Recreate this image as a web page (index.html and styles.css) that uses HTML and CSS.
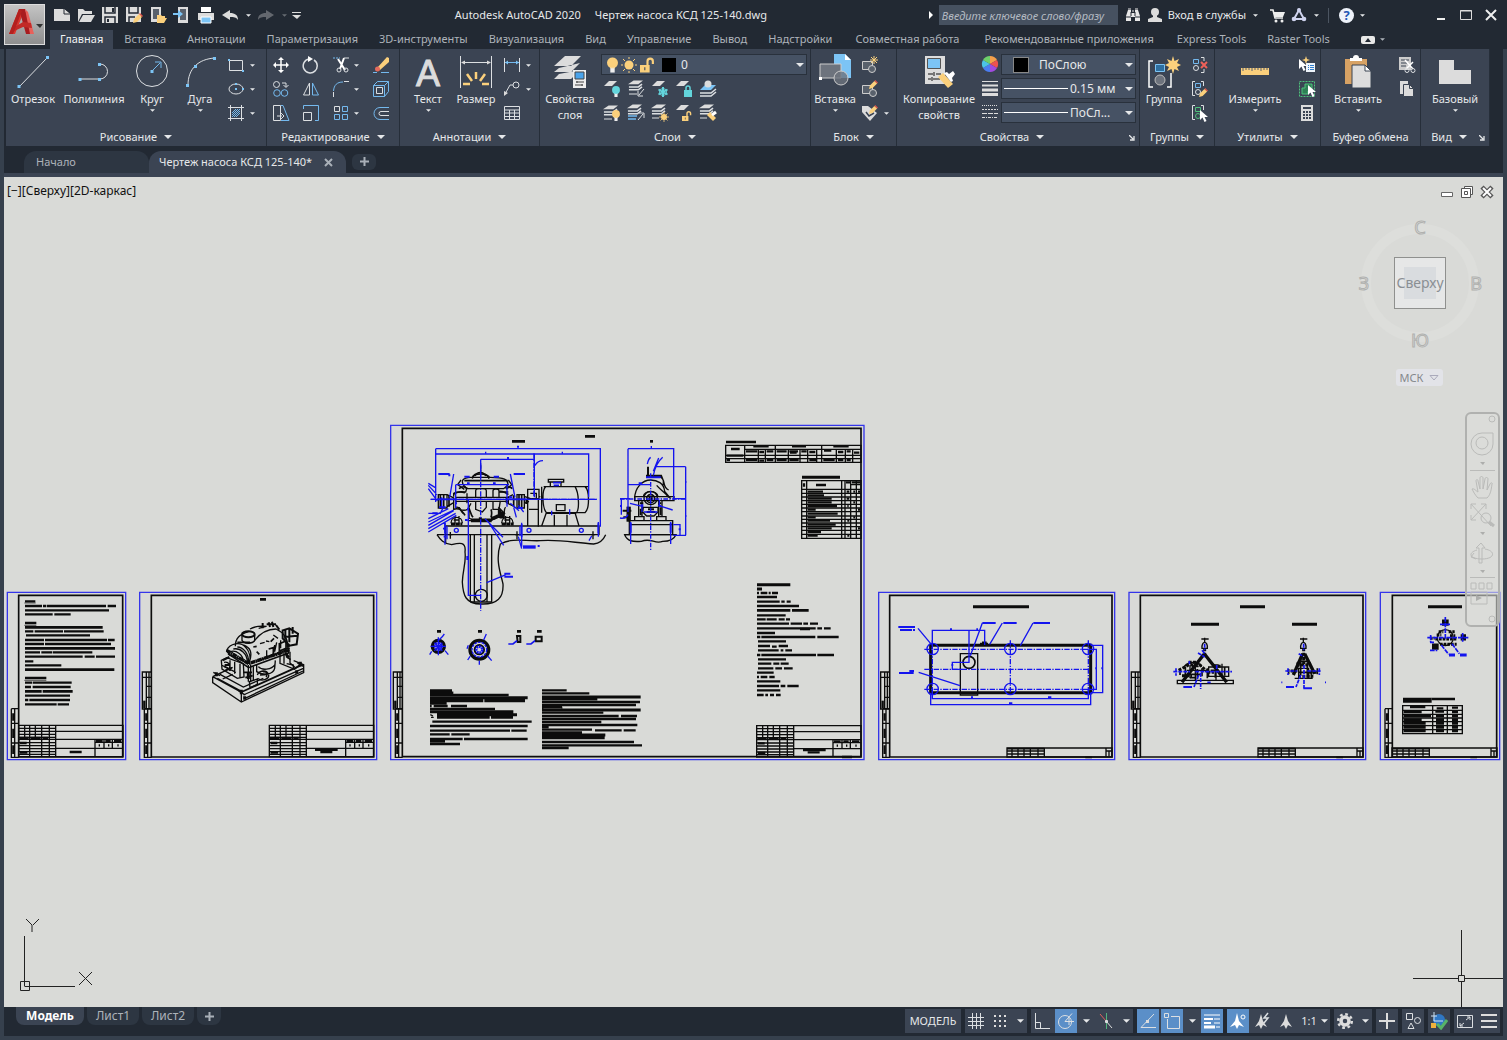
FILE: index.html
```
<!DOCTYPE html>
<html lang="ru">
<head>
    <meta charset="UTF-8">
    <meta name="viewport" content="width=device-width, initial-scale=1.0">
    <title>Autodesk AutoCAD 2020 - Чертеж насоса КСД 125-140.dwg</title>
    <link rel="stylesheet" href="styles.css">
</head>
<body>
    <!-- Shared symbols -->
    <svg class="sprite" aria-hidden="true">
        <symbol id="caret" viewBox="0 0 8 4"><path d="M0 0h8L4 4z" fill="currentColor"/></symbol>
        <symbol id="corner" viewBox="0 0 6 6"><path d="M0 0l4 4M5 1v4H1" fill="none" stroke="currentColor" stroke-width="1.3"/></symbol>
        <symbol id="layers" viewBox="0 0 16 12">
            <path d="M6 0h10l-5 4H0z" class="wf"/>
            <path d="M1 7h10l4-3M1 10h10l4-3" class="w" stroke-width="1.6"/>
        </symbol>
        <symbol id="cursor" viewBox="0 0 8 12"><path d="M0 0v10l2.500-2.500L4.500 12l2-1-2-4H8z" fill="#fff"/></symbol>
        <symbol id="pencil" viewBox="0 0 10 10"><path d="M0 10l1-4 5-5 3 3-5 5z" fill="#fbd07c"/><path d="M6 1l1-1 3 3-1 1z" fill="#e2574c"/></symbol>
        <symbol id="bulb" viewBox="0 0 10 14"><circle cx="5" cy="5" r="5" fill="currentColor"/><path d="M3 9h4v5H3z" fill="#eee"/><path d="M3 9h4v1H3z" fill="currentColor"/></symbol>
        <symbol id="open-lock" viewBox="0 0 14 14"><path d="M0 7h9v7H0z" fill="#fbd07c"/><path d="M7 7V3.500a2.500 2.500 0 0 1 5 0V6" fill="none" stroke="#fbd07c" stroke-width="2"/><path d="M4 9h1v3H4z" fill="#3b4453"/></symbol>

        <!-- stamp of a sheet, 104 x 31 units of the drawing, drawn at triple scale -->
        <symbol id="stamp" viewBox="0 0 313 95" overflow="visible">
            <path class="k" d="M0 0h313v94H0zM0 9h111M0 18h313M0 27h111M0 36h111M0 42h313M0 52h111M0 61h111M0 70h111M111 69h202M0 79h111M0 87h111M18 0v42M33 0v94M50 0v42M69 0v94M92 0v94M111 0v94M229 42v52M256 42v27M281 42v27M229 51h84"/>
            <path class="k bar" d="M2 38h28M36 38h30M72 38h16M4 53h20M4 82h22M153 80h36M232 47h20M260 47h16M286 47h22M240 60h4M268 60h4M296 60h4"/>
        </symbol>
        <symbol id="stamp-low" viewBox="0 0 315 28" overflow="visible">
            <path class="k" d="M0 0h315v27H0zM0 9h112M0 18h112M15 0v27M33 0v27M51 0v27M70 0v27M93 0v27M112 0v27M297 0v27M297 9h18M306 9v18"/>
            <path class="k" stroke-width="5" d="M0 2h112M235 28h20"/>
        </symbol>
        <symbol id="side-low" viewBox="0 0 22 146" overflow="visible">
            <path class="k" d="M0 0h22M0 0v146h22M0 44h22M0 103h22M10 0v146"/>
            <path class="k" stroke-width="7" d="M6 14v22M6 60v28M6 110v26"/>
        </symbol>
        <symbol id="side" viewBox="0 0 28 256" overflow="visible">
            <path class="k" d="M28 0H0v111h28M12 0v111M20 0v111M0 16h28M12 43h16M12 76h16"/>
            <path class="k" stroke-width="7" d="M6 86v22"/>
            <use href="#side-low" x="6" y="110" width="22" height="146"/>
        </symbol>
    </svg>

    <header class="header">
        <button class="app-button" aria-label="Меню приложения">
            <svg width="38" height="38" viewBox="0 0 38 38">
                <path d="M3 28L13 3h6L9 28z" fill="#d9362f"/>
                <path d="M13 3h6l8 25h-7z" fill="#a81c1f"/>
                <path d="M19 3l3 3 6 22h-4z" fill="#e8605a"/>
                <path d="M7 22l10-6 8 1 1 5-9-1-11 5z" fill="#c22a27"/>
                <path d="M13 3l3 2L7 28H3z" fill="#b3211f"/>
                <path d="M30 18h7l-3 4z" fill="#333"/>
            </svg>
        </button>

        <div class="titlebar">
            <div class="quick">
                <button aria-label="Создать"><svg viewBox="0 0 18 18"><path d="M1 3h10l6 5v7H1z" class="wf"/><path d="M11 3v5h6" class="wf" stroke="#222933"/></svg></button>
                <button aria-label="Открыть"><svg viewBox="0 0 18 18"><path d="M1 16V3h5l2 2h7v3H5z" class="wf"/><path d="M6 9h12l-4 7H2z" class="wf"/></svg></button>
                <button aria-label="Сохранить"><svg viewBox="0 0 18 18"><path d="M1 1h16v16H1z" class="wf"/><path d="M4 1v6h10V1M4 17v-6h10v6" fill="none" stroke="#222933" stroke-width="1.500"/><path d="M11 2h2v4h-2zM6 13h2v3H6z" fill="#222933"/></svg></button>
                <button aria-label="Сохранить как"><svg viewBox="0 0 18 18"><path d="M1 1h15v15H1z" class="wf"/><path d="M4 1v6h9V1M4 16v-5h6" fill="none" stroke="#222933" stroke-width="1.500"/><use href="#pencil" x="8" y="7" width="10" height="10"/></svg></button>
                <button aria-label="Открыть из мобильной версии"><svg viewBox="0 0 18 18"><path d="M2 1h10v15H2z" class="wf"/><path d="M4 3h6v10H4z" fill="#59616c"/><path d="M8 17V9h4l1 1h3v2h2l-3 5z" fill="#fbd07c"/></svg></button>
                <button aria-label="Сохранить в мобильную версию"><svg viewBox="0 0 18 18"><path d="M5 1h10v16H5z" class="wf"/><path d="M7 3h6v11H7z" fill="#59616c"/><path d="M0 7h5V4l5 4-5 4V9H0z" class="bf"/></svg></button>
                <button aria-label="Печать"><svg viewBox="0 0 18 18"><path d="M4 1h10v5H4z" fill="#fff"/><path d="M1 7h16v7H1z" class="wf"/><path d="M4 11h10v6H4z" class="bf" stroke="#fff"/></svg></button>
                <button aria-label="Отменить"><svg viewBox="0 0 18 18"><path d="M1 9l8-5v3c5 0 8 2 8 7-2-3-4-3-8-3v3z" class="wf"/></svg></button>
                <button class="narrow" aria-label="Список отмены"><svg class="caret-s"><use href="#caret"/></svg></button>
                <button class="off" aria-label="Повторить"><svg viewBox="0 0 18 18"><path d="M17 9L9 4v3c-5 0-8 2-8 7 2-3 4-3 8-3v3z" class="wf"/></svg></button>
                <button class="narrow off" aria-label="Список повтора"><svg class="caret-s"><use href="#caret"/></svg></button>
                <button class="narrow" aria-label="Настройка панели"><svg viewBox="0 0 18 18"><path d="M5 6h9v1H5zM5 9h9l-4 4z" class="wf"/></svg></button>
            </div>
            <h1 class="title"><span>Autodesk AutoCAD 2020</span><span>Чертеж насоса КСД 125-140.dwg</span></h1>
            <div class="services">
                <svg class="play" viewBox="0 0 4 8"><path d="M0 0l4 4-4 4z" fill="#fff"/></svg>
                <input type="text" class="search" aria-label="Поиск" placeholder="Введите ключевое слово/фразу">
                <button class="find" aria-label="Найти"><svg viewBox="0 0 18 18"><path d="M4 4h3v3h4V4h3l2 6v5h-5v-4H7v4H2v-5z" fill="#e8e8e8"/><path d="M4 3h3M11 3h3M8 5h2" stroke="#e8e8e8"/><path d="M2 11h5M11 11h5M7 6v4M11 6v4" stroke="#222933" fill="none"/></svg></button>
                <button class="login"><svg viewBox="0 0 18 18"><circle cx="9" cy="6" r="4" class="wf"/><path d="M7 8h4v3l5 2v3H2v-3l5-2z" class="wf"/></svg>Вход в службы<svg class="caret-s"><use href="#caret"/></svg></button>
                <button aria-label="Магазин"><svg viewBox="0 0 18 18"><path d="M2 4h3l2 8h8" fill="none" stroke="#eee" stroke-width="1.600"/><path d="M5 6h12l-2 5H7z" fill="#eee"/><circle cx="8" cy="15" r="1.500" fill="#eee"/><circle cx="14" cy="15" r="1.500" fill="#eee"/></svg></button>
                <button class="a360" aria-label="Autodesk 360"><svg viewBox="0 0 18 18"><path d="M9 4L4 13h10z" fill="none" stroke="#cfd3ee" stroke-width="2"/><circle cx="9" cy="4" r="2" fill="#cfd3ee"/><circle cx="4" cy="13" r="2.300" fill="#cfd3ee"/><circle cx="14" cy="13" r="2.300" fill="#cfd3ee"/></svg><svg class="caret-s"><use href="#caret"/></svg></button>
                <button class="help" aria-label="Справка"><span>?</span><svg class="caret-s"><use href="#caret"/></svg></button>
            </div>
            <div class="window-buttons">
                <button aria-label="Свернуть"><svg viewBox="0 0 14 14"><path d="M3 11h8" stroke="#eee" stroke-width="2"/></svg></button>
                <button aria-label="Развернуть"><svg viewBox="0 0 14 14"><path d="M1.500 2.500h11v9h-11z" fill="none" stroke="#ddd"/><path d="M1 3h12" stroke="#ddd"/></svg></button>
                <button aria-label="Закрыть"><svg viewBox="0 0 14 14"><path d="M2 2l10 10M12 2L2 12" stroke="#eee" stroke-width="2"/></svg></button>
            </div>
        </div>

        <nav class="tabs">
            <button class="tab active">Главная</button>
            <button class="tab">Вставка</button>
            <button class="tab">Аннотации</button>
            <button class="tab">Параметризация</button>
            <button class="tab">3D-инструменты</button>
            <button class="tab">Визуализация</button>
            <button class="tab">Вид</button>
            <button class="tab">Управление</button>
            <button class="tab">Вывод</button>
            <button class="tab">Надстройки</button>
            <button class="tab wide">Совместная работа</button>
            <button class="tab wide">Рекомендованные приложения</button>
            <button class="tab">Express Tools</button>
            <button class="tab">Raster Tools</button>
            <button class="tab-toggle" aria-label="Свернуть ленту"><svg width="14" height="8" viewBox="0 0 14 8"><rect width="14" height="8" rx="2" fill="#e8e8e8"/><path d="M4 6h6L7 2z" fill="#222933"/></svg><svg class="caret-s"><use href="#caret"/></svg></button>
        </nav>
    </header>

    <main class="frame">
        <div class="ribbon">
            <section class="panel">
                <div class="panel-body">
                    <button class="big w54"><svg viewBox="0 0 34 38"><path d="M3 34L31 5" class="w"/><path d="M1.500 32h3v3h-3zM30 3h3v3h-3z" class="bf"/></svg>Отрезок</button>
                    <button class="big w68"><svg viewBox="0 0 34 38"><path d="M3 26h20a7.500 7.500 0 0 0 0-15" class="w"/><path d="M1.500 25h3v3h-3zM21 25h3v3h-3zM21 10h3v3h-3z" class="bf"/></svg>Полилиния</button>
                    <button class="big w48"><svg viewBox="0 0 34 38"><circle cx="17" cy="18" r="15.500" class="w"/><path d="M17 18l8-8M20 9h6v6" class="b"/><path d="M15.500 17h3v3h-3z" class="bf"/></svg>Круг<svg class="caret-s"><use href="#caret"/></svg></button>
                    <button class="big w48"><svg viewBox="0 0 34 38"><path d="M5 32C5 16 15 6 32 5" class="w"/><path d="M3 31h3v3H3zM11 12h3v3h-3zM30 4h3v3h-3z" class="bf"/></svg>Дуга<svg class="caret-s"><use href="#caret"/></svg></button>
                    <div class="tools stack">
                        <div class="split"><button aria-label="Прямоугольник"><svg viewBox="0 0 18 18"><path d="M2.500 4.500h13v10h-13z" class="w"/><path d="M1 3h2v2H1zM15 14h2v2h-2z" class="bf"/></svg></button><button class="arrow" aria-label="Еще"><svg class="caret-s"><use href="#caret"/></svg></button></div>
                        <div class="split"><button aria-label="Эллипс"><svg viewBox="0 0 18 18"><ellipse cx="9" cy="9" rx="7" ry="5" class="w"/><path d="M8 8h2v2H8zM15 8h2v2h-2zM8 3h2v2H8z" class="bf"/></svg></button><button class="arrow" aria-label="Еще"><svg class="caret-s"><use href="#caret"/></svg></button></div>
                        <div class="split"><button aria-label="Штриховка"><svg viewBox="0 0 18 18"><path d="M3.500 1v16M14.500 1v16M1 3.500h16M1 14.500h16" class="w"/><path d="M5 9l4-4M5 13l8-8M9 13l4-4M5 11l6-6M7 13l6-6" class="b"/></svg></button><button class="arrow" aria-label="Еще"><svg class="caret-s"><use href="#caret"/></svg></button></div>
                    </div>
                </div>
                <div class="panel-title"><button>Рисование<svg class="caret"><use href="#caret"/></svg></button></div>
            </section>

            <section class="panel">
                <div class="panel-body">
                    <div class="tools modify">
                        <button aria-label="Перенести"><svg viewBox="0 0 18 18"><path d="M9 3v12M3 9h12" stroke="#fff" stroke-width="1.500"/><path d="M9 1l3 3H6zM9 17l3-3H6zM1 9l3-3v6zM17 9l-3-3v6z" fill="#fff"/></svg></button>
                        <button aria-label="Повернуть"><svg viewBox="0 0 18 18"><path d="M12 4a7 7 0 1 1-5-1" class="w" stroke-width="1.500"/><path d="M6 0l5 3-5 3z" fill="#fff"/></svg></button>
                        <div class="split"><button aria-label="Обрезать"><svg viewBox="0 0 18 18"><path d="M1 2h7" class="b" stroke-dasharray="2 1"/><path d="M6 3l7 11M12 2L8 13" stroke="#fff" stroke-width="2" fill="none"/><circle cx="7" cy="14" r="2" class="w"/><circle cx="14" cy="14" r="2" class="w"/><path d="M12 2h5" class="w"/></svg></button><button class="arrow" aria-label="Еще"><svg class="caret-s"><use href="#caret"/></svg></button></div>
                        <button aria-label="Стереть"><svg viewBox="0 0 18 18"><path d="M5 12L15 1l2 1v4l-9 8z" fill="#fbd07c"/><circle cx="5.500" cy="13" r="2.500" fill="#e56b5d"/><path d="M1 16.500h4M9 16.500h8" class="b"/></svg></button>
                        <button aria-label="Копировать"><svg viewBox="0 0 18 18"><circle cx="4.500" cy="4.500" r="3" class="w"/><circle cx="5" cy="13" r="3.300" class="b"/><circle cx="12.500" cy="13" r="3.300" class="b"/><path d="M10 3h4v4M11.500 5l2.500 2.500L16.500 5" class="w"/></svg></button>
                        <button aria-label="Зеркало"><svg viewBox="0 0 18 18"><path d="M7.500 3v12H1.500z" class="w"/><path d="M10.500 3v12h6z" class="b"/></svg></button>
                        <div class="split"><button aria-label="Сопряжение"><svg viewBox="0 0 18 18"><path d="M1.500 11C2 5 5 2 11 2" class="b"/><path d="M1.500 12v5M12 1.500h5" class="w"/></svg></button><button class="arrow" aria-label="Еще"><svg class="caret-s"><use href="#caret"/></svg></button></div>
                        <button aria-label="Расчленить"><svg viewBox="0 0 18 18"><path d="M4.500 7.500h6v6h-6z" class="w"/><path d="M1.500 5.500h11v11h-11zM1.500 5.500l4-4h11l-4 4M16.500 1.500v10l-4 5" class="b"/></svg></button>
                        <button aria-label="Растянуть"><svg viewBox="0 0 18 18"><path d="M1.500 1.500h7v15h-7z" class="w"/><path d="M9 1.500h2l6 15H9" class="b"/><path d="M5 12h5M9 9l3 3-3 3" class="w"/></svg></button>
                        <button aria-label="Масштаб"><svg viewBox="0 0 18 18"><path d="M1.500 8.500h8v8h-8z" class="w"/><path d="M1.500 5V1.500h15v15H13" class="b"/></svg></button>
                        <div class="split"><button aria-label="Массив"><svg viewBox="0 0 18 18"><path d="M2.500 2.500h5v5h-5z" class="w"/><path d="M10.500 2.500h5v5h-5zM2.500 10.500h5v5h-5zM10.500 10.500h5v5h-5z" class="b"/></svg></button><button class="arrow" aria-label="Еще"><svg class="caret-s"><use href="#caret"/></svg></button></div>
                        <button aria-label="Подобие"><svg viewBox="0 0 18 18"><path d="M17 3.500H8a5.500 5.500 0 0 0 0 12h9" class="b"/><path d="M17 7.500H9a2 2 0 0 0 0 4h8" class="w"/></svg></button>
                    </div>
                </div>
                <div class="panel-title"><button>Редактирование<svg class="caret"><use href="#caret"/></svg></button></div>
            </section>

            <section class="panel">
                <div class="panel-body pad">
                    <button class="big w48"><svg viewBox="0 0 34 38"><text x="17" y="33" class="big-a">A</text></svg>Текст<svg class="caret-s"><use href="#caret"/></svg></button>
                    <button class="big w48"><svg viewBox="0 0 34 38"><path d="M1.500 3v32M32.500 3v32M3 9.500h28" class="w"/><path d="M2 9.500l4-2v4zM32 9.500l-4-2v4z" class="wf"/><path d="M17 19v7M8 21l5 7M26 21l-5 7M4 31h7M30 31h-7" stroke="#fbd07c" stroke-width="2.500"/></svg>Размер</button>
                    <div class="tools stack">
                        <div class="split"><button aria-label="Линейный"><svg viewBox="0 0 18 18"><path d="M1.500 2v14M16.500 2v14" class="w"/><path d="M2 6.500h14" class="b"/><path d="M2 6.500l3-2v4zM16 6.500l-3-2v4z" class="bf"/></svg></button><button class="arrow" aria-label="Еще"><svg class="caret-s"><use href="#caret"/></svg></button></div>
                        <div class="split"><button aria-label="Выноска"><svg viewBox="0 0 18 18"><circle cx="13" cy="5" r="3" class="w"/><path d="M10 5H7l-5 9" class="w"/><path d="M1 16v-5l4 2z" class="wf"/></svg></button><button class="arrow" aria-label="Еще"><svg class="caret-s"><use href="#caret"/></svg></button></div>
                        <div class="split"><button aria-label="Таблица"><svg viewBox="0 0 18 18"><path d="M1.500 2.500h15v13h-15zM1 6h16M1 9h16M1 12.500h16M6.500 6v10M11.500 6v10" class="w"/></svg></button></div>
                    </div>
                </div>
                <div class="panel-title"><button>Аннотации<svg class="caret"><use href="#caret"/></svg></button></div>
            </section>

            <section class="panel">
                <div class="panel-body">
                    <button class="big w60"><svg viewBox="0 0 34 38"><path d="M12 3h16L18 13H1zM6 15l-5 4h17l9-9M6 21l-5 5h17l9-9" class="wf"/><path d="M20 17h13v18H20z" fill="#eee"/><path d="M22 19h9v7h-9z" fill="#4aa3ea" stroke="#444"/><path d="M23 29h8M22 32h8M24 28v2M29 31v2" stroke="#444"/></svg><span>Свойства<br>слоя</span></button>
                    <div class="layer-box">
                        <div class="combo layer-combo">
                            <svg width="11" height="16" viewBox="0 0 10 14" class="y"><use href="#bulb"/></svg>
                            <svg width="16" height="16" viewBox="0 0 16 16"><circle cx="8" cy="8" r="4.500" class="yf"/><path d="M8 0v2M8 14v2M0 8h2M14 8h2M2 2l2 2M12 12l2 2M2 14l2-2M12 4l2-2" stroke="#fbd07c"/></svg>
                            <svg width="15" height="16"><use href="#open-lock"/></svg>
                            <i class="swatch"></i>
                            <select aria-label="Слой"><option>0</option></select>
                            <svg class="caret"><use href="#caret"/></svg>
                        </div>
                        <div class="tools layer-tools">
                            <button aria-label="Отключить слой"><svg viewBox="0 0 18 18"><path d="M6 1h8L9 6H1z" class="wf"/><svg x="9" y="6" width="8" height="11" viewBox="0 0 10 14" color="#63d5dc"><use href="#bulb"/></svg></svg></button>
                            <button aria-label="Изолировать слой"><svg viewBox="0 0 18 18"><use href="#layers" x="1" y="0" width="15" height="12"/><path d="M2 14h8" class="w"/><path d="M17 9l-5 6M11 11v5h5" class="w"/></svg></button>
                            <button aria-label="Заморозить слой"><svg viewBox="0 0 18 18"><path d="M6 1h8L9 6H1z" class="wf"/><path d="M12 7v10M7.500 9.500l9 5M16.500 9.500l-9 5" stroke="#63d5dc" stroke-width="2"/><circle cx="12" cy="12" r="3.500" fill="none" stroke="#63d5dc"/></svg></button>
                            <button aria-label="Заблокировать слой"><svg viewBox="0 0 18 18"><path d="M6 1h8L9 6H1z" class="wf"/><path d="M9 10h8v7H9z" fill="#63d5dc"/><path d="M11 10V8a2 2 0 0 1 4 0v2" fill="none" stroke="#63d5dc" stroke-width="1.500"/></svg></button>
                            <button aria-label="Сделать текущим"><svg viewBox="0 0 18 18"><path d="M6 5h11l-5 5H1z" class="bf"/><path d="M1 13h11l5-4M1 16h11l5-4" class="w" stroke-width="1.500"/><circle cx="9" cy="4" r="3.500" class="wf"/></svg></button>
                            <button aria-label="Включить все слои"><svg viewBox="0 0 18 18"><use href="#layers" x="0" y="1" width="15" height="12"/><path d="M1 15h8" class="w"/><svg x="9" y="6" width="8" height="11" viewBox="0 0 10 14" color="#fbd07c"><use href="#bulb"/></svg></svg></button>
                            <button aria-label="Отменить изоляцию"><svg viewBox="0 0 18 18"><use href="#layers" x="0" y="0" width="15" height="12"/><path d="M1 12h9M1 15h8" class="b" stroke-width="1.500"/><path d="M11 16l5-6M12 9h5v5" class="w"/></svg></button>
                            <button aria-label="Разморозить все"><svg viewBox="0 0 18 18"><use href="#layers" x="0" y="0" width="15" height="12"/><path d="M1 14h7" class="w"/><circle cx="13" cy="13" r="3" class="yf"/><path d="M13 8v10M8 13h10M9.500 9.500l7 7M16.500 9.500l-7 7" stroke="#fbd07c" stroke-width=".8"/></svg></button>
                            <button aria-label="Разблокировать слой"><svg viewBox="0 0 18 18"><path d="M6 1h8L9 6H1z" class="wf"/><use href="#open-lock" x="7" y="7" width="10" height="10"/></svg></button>
                            <button aria-label="Копировать свойства слоя"><svg viewBox="0 0 18 18"><use href="#layers" x="0" y="0" width="15" height="12"/><path d="M1 14h7" class="w"/><path d="M8 11l3-3 6 6-3 3z" class="yf"/><path d="M13 11l4-3" stroke="#fff" stroke-width="3"/></svg></button>
                        </div>
                    </div>
                </div>
                <div class="panel-title"><button>Слои<svg class="caret"><use href="#caret"/></svg></button></div>
            </section>

            <section class="panel">
                <div class="panel-body">
                    <button class="big w48"><svg viewBox="0 0 34 38"><path d="M16 1h11l6 6v18H16z" class="bf"/><path d="M27 1v6h6" fill="#fff"/><path d="M2 11h21v14H2z" fill="#6d737d" stroke="#ccc"/><circle cx="23" cy="25" r="7" fill="#6d737d" fill-opacity=".8" stroke="#ccc"/><path d="M1 24h3v3H1z" fill="#fff"/></svg>Вставка<svg class="caret-s"><use href="#caret"/></svg></button>
                    <div class="tools stack tight">
                        <div class="split"><button aria-label="Создать блок"><svg viewBox="0 0 18 18"><path d="M1.500 5.500h10v8h-10z" fill="#59616c" stroke="#ccc"/><circle cx="11" cy="13" r="3.500" fill="#59616c" stroke="#ccc"/><path d="M13 0v8M9 4h8M10 1l6 6M16 1l-6 6" stroke="#fbd07c"/></svg></button></div>
                        <div class="split"><button aria-label="Редактировать блок"><svg viewBox="0 0 18 18"><path d="M1.500 5.500h10v8h-10z" fill="#59616c" stroke="#ccc"/><circle cx="12" cy="13" r="3.500" fill="#59616c" stroke="#ccc"/><use href="#pencil" x="8" y="0" width="9" height="9"/></svg></button></div>
                        <div class="split"><button aria-label="Атрибуты"><svg viewBox="0 0 18 18"><path d="M1 2h6l9 7-7 8-8-9z" class="wf"/><path d="M5 8l3 4 5-3" fill="none" stroke="#3b4453" stroke-width="1.500"/><use href="#pencil" x="8" y="1" width="9" height="9"/></svg></button><button class="arrow" aria-label="Еще"><svg class="caret-s"><use href="#caret"/></svg></button></div>
                    </div>
                </div>
                <div class="panel-title"><button>Блок<svg class="caret"><use href="#caret"/></svg></button></div>
            </section>

            <section class="panel">
                <div class="panel-body">
                    <button class="big w84"><svg viewBox="0 0 34 38"><path d="M3 3h20v28H3z" fill="#ddd"/><path d="M5.500 5.500h13v10h-13z" fill="#7cc4f5" stroke="#555"/><path d="M6 21h5M14 21h5M12 19v4M6 26h3M11 26h7M10 24v4" stroke="#555" stroke-width="1.500"/><path d="M16 24l5-4 10 11-5 4z" class="yf"/><path d="M22 20l3-1 2 2 4-3 2 3-3 4 1 3-2 1z" fill="#fff"/></svg><span>Копирование<br>свойств</span></button>
                    <div class="props">
                        <label for="color" aria-label="Цвет"><svg viewBox="0 0 18 18"><path d="M9 9V1a8 8 0 0 1 7 4z" fill="#f5a04b"/><path d="M9 9l7-4a8 8 0 0 1 0 8z" fill="#ee5350"/><path d="M9 9l7 4a8 8 0 0 1-7 4z" fill="#a14be0"/><path d="M9 9v8a8 8 0 0 1-7-4z" fill="#4b7df0"/><path d="M9 9l-7 4a8 8 0 0 1 0-8z" fill="#4cc4e6"/><path d="M9 9L2 5a8 8 0 0 1 7-4z" fill="#6ed06a"/></svg></label>
                        <div class="combo color-combo"><i class="swatch"></i><select id="color"><option>ПоСлою</option></select><svg class="caret"><use href="#caret"/></svg></div>
                        <label for="weight" aria-label="Вес линий"><svg viewBox="0 0 18 18"><path d="M1 2.500h16" stroke="#ddd"/><path d="M1 6.500h16" stroke="#ddd" stroke-width="2"/><path d="M1 11h16" stroke="#ddd" stroke-width="3"/><path d="M1 15.500h16" stroke="#ddd" stroke-width="3"/></svg></label>
                        <div class="combo"><i class="sample"></i><select id="weight"><option>0.15 мм</option></select><svg class="caret"><use href="#caret"/></svg></div>
                        <label for="linetype" aria-label="Тип линий"><svg viewBox="0 0 18 18"><path d="M1 2.500h16" stroke="#ddd" stroke-dasharray="1 1"/><path d="M1 6.500h16" stroke="#ddd" stroke-dasharray="2 1"/><path d="M1 10.500h16" stroke="#ddd" stroke-dasharray="5 1"/><path d="M1 14.500h16" stroke="#ddd" stroke-dasharray="3 1 1 1"/></svg></label>
                        <div class="combo"><i class="sample"></i><select id="linetype"><option>ПоСл...</option></select><svg class="caret"><use href="#caret"/></svg></div>
                    </div>
                </div>
                <div class="panel-title with-corner"><button>Свойства<svg class="caret"><use href="#caret"/></svg></button><button class="corner" aria-label="Палитра свойств"><svg><use href="#corner"/></svg></button></div>
            </section>

            <section class="panel">
                <div class="panel-body">
                    <button class="big w48"><svg viewBox="0 0 34 38"><path d="M6 8H2v26h4M20 34h4V20" fill="none" stroke="#fff" stroke-width="1.500"/><path d="M8.500 11.500h9v7h-9z" fill="#2f6f9f" stroke="#7cc4f5"/><circle cx="13" cy="27" r="5" fill="#6d737d" stroke="#bbb"/><path d="M26 3l1.500 5L32 6l-2 4 4 2-4 2 2 4-4.500-2L26 21l-1.500-5-4.500 2 2-4-4-2 4-2-2-4 4.500 2z" class="yf"/></svg>Группа</button>
                    <div class="tools stack1">
                        <button aria-label="Разгруппировать"><svg viewBox="0 0 18 18"><path d="M10 1.500h3V5M10 16.500h3V13" class="w"/><path d="M2.500 3.500h5v4h-5z" class="b"/><circle cx="5" cy="12" r="2.500" class="w"/><path d="M10 6l6 6M16 6l-6 6" stroke="#ee6058" stroke-width="2"/></svg></button>
                        <button aria-label="Редактировать группу"><svg viewBox="0 0 18 18"><path d="M4 1.500H1.500v14H4M10 1.500h2.500V6" class="w"/><path d="M4.500 3.500h5v4h-5z" class="b"/><circle cx="7" cy="12" r="2.500" class="w"/><use href="#pencil" x="8" y="8" width="9" height="9"/></svg></button>
                        <button aria-label="Выбор группы"><svg viewBox="0 0 18 18"><path d="M4 1.500H1.500v14H4M10 1.500h2.500V6" class="w"/><path d="M4.500 3.500h5v4h-5z" class="g"/><circle cx="7" cy="12" r="2.500" class="g"/><use href="#cursor" x="9" y="6" width="8" height="12"/></svg></button>
                    </div>
                </div>
                <div class="panel-title"><button>Группы<svg class="caret"><use href="#caret"/></svg></button></div>
            </section>

            <section class="panel">
                <div class="panel-body">
                    <button class="big w80"><svg viewBox="0 0 34 38"><path d="M3 15h28v7H3z" class="yf"/><path d="M5 15v3M8 15v2M11 15v2M14 15v3M17 15v2M20 15v2M23 15v3M26 15v2M29 15v2" stroke="#59616c"/></svg>Измерить<svg class="caret-s"><use href="#caret"/></svg></button>
                    <div class="tools stack1">
                        <button aria-label="Быстрый выбор"><svg viewBox="0 0 18 18"><path d="M8 7h9v9H8z" fill="#eef4fa"/><path d="M10 9.500h1M12 9.500h4M10 11.500h1M12 11.500h4M10 13.500h1M12 13.500h4" stroke="#2f7fd0"/><path d="M8 0l1 3 3 1-3 1-1 3-1-3-3-1 3-1z" class="yf"/><use href="#cursor" x="1" y="3" width="8" height="12"/></svg></button>
                        <button aria-label="Выбрать все"><svg viewBox="0 0 18 18"><path d="M1.500 1.500h15v15h-15z" fill="none" stroke="#4fc17c" stroke-dasharray="2 1"/><path d="M4 8h3V4h7v7h-4v3H4z" fill="#2f7f55" stroke="#4fc17c"/><use href="#cursor" x="10" y="5" width="8" height="12"/></svg></button>
                        <button aria-label="Калькулятор"><svg viewBox="0 0 18 18"><path d="M3 1h12v16H3z" class="wf"/><path d="M5 3h8v2H5z" fill="#3b4453"/><path d="M5 8h8M5 11h8M5 14h8" stroke="#3b4453" stroke-width="2" stroke-dasharray="2 1"/></svg></button>
                    </div>
                </div>
                <div class="panel-title"><button>Утилиты<svg class="caret"><use href="#caret"/></svg></button></div>
            </section>

            <section class="panel">
                <div class="panel-body">
                    <button class="big w74"><svg viewBox="0 0 34 38"><path d="M4 6h22v25H4z" fill="#d7a264"/><path d="M9 8V5h3a3 3 0 0 1 6 0h3v3z" fill="#fff"/><path d="M11 12h13l6 6v17H11z" fill="#ddd" stroke="#3b4453"/><path d="M24 12v6h6z" fill="#fff" stroke="#3b4453"/></svg>Вставить<svg class="caret-s"><use href="#caret"/></svg></button>
                    <div class="tools stack1">
                        <button aria-label="Вырезать"><svg viewBox="0 0 18 18"><path d="M1 1h12v13H1z" fill="#ccc"/><path d="M3 4h8M3 7h6M3 10h5" stroke="#3b4453"/><path d="M7 4l8 9M15 6l-7 7" stroke="#fff" stroke-width="1.500"/><circle cx="9" cy="14.500" r="2" class="w"/><circle cx="15" cy="14.500" r="2" class="w"/></svg></button>
                        <button aria-label="Копировать в буфер"><svg viewBox="0 0 18 18"><path d="M2 1h8v13H2z" class="wf"/><path d="M5.500 4.500h6l4 4v8h-10z" class="wf" stroke="#3b4453"/><path d="M11.500 4.500v4h4" fill="none" stroke="#3b4453"/></svg></button>
                    </div>
                </div>
                <div class="panel-title"><button>Буфер обмена</button></div>
            </section>

            <section class="panel">
                <div class="panel-body">
                    <button class="big w68"><svg viewBox="0 0 34 38"><path d="M1 7h15v10h17v14H1z" class="wf"/></svg>Базовый<svg class="caret-s"><use href="#caret"/></svg></button>
                </div>
                <div class="panel-title with-corner"><button>Вид<svg class="caret"><use href="#caret"/></svg></button><button class="corner" aria-label="Палитра видов"><svg><use href="#corner"/></svg></button></div>
            </section>
        </div>

        <div class="file-tabs">
            <button class="file-tab start">Начало</button>
            <div class="file-tab active"><button>Чертеж насоса КСД 125-140*</button><button class="close" aria-label="Закрыть вкладку"><svg viewBox="0 0 9 9"><path d="M1 1l7 7M8 1L1 8" stroke="#a9b0b8" stroke-width="2"/></svg></button></div>
            <button class="file-tab plus" aria-label="Новый чертеж"><svg viewBox="0 0 9 9"><path d="M4.500 0v9M0 4.500h9" stroke="#a9b0b8" stroke-width="2"/></svg></button>
        </div>

        <div class="canvas">
            <svg class="drawing" viewBox="4 177 1499 830" preserveAspectRatio="xMidYMid meet">
                <!-- sheets 1 and 2 -->
                <g transform="translate(0 585) scale(.33333)">
                    <path class="f" d="M22 22h355v502H22zM419 22h711v502H419z"/>
                    <path class="k" stroke-width="5" d="M56 31h312v485H56zM454 31h667v485H454z"/>
                    <path class="k bar" d="M75 49h31M75 63h51M129 63h10M141 63h177M323 63h25M75 76h252M75 88h83M163 88h49M75 114h34M75 139h25M104 139h85M192 139h119M78 151h192M75 165h57M135 165h186M324 165h20M75 177h57M135 177h198M75 202h45M124 202h32M158 202h119M75 215h173M254 215h30M288 215h57M75 229h25M75 241h109M75 279h64M75 293h22M99 293h116M75 306h18M98 306h114M75 332h135M75 345h10M88 345h122M75 358h95M173 358h34"/>
                    <path class="k thick" d="M75 127h233M75 190h270M75 254h268M75 319h50M128 319h90"/>
                    <path class="k" stroke-width="2" d="M73 54h34M73 121h36M73 286h66"/>
                    <use href="#side-low" x="34" y="371" width="22" height="146"/>
                    <use href="#stamp" x="56" y="421" width="313" height="95"/>
                    <use href="#side" x="427" y="261" width="28" height="256"/>
                    <use href="#stamp" x="808" y="421" width="313" height="95"/>
                    <path class="k thick" d="M780 43h18M945 494h68"/>

                    <!-- pump, isometric -->
                    <path class="k" d="M638 275l86 47 186-83M638 275v18l86 58 187-88v-24l-30-12M724 322v30M638 275l60-28M652 280l74 40 170-77M660 268l70 38 60-26M730 330l180-80M735 340l174-82M648 272l26-14M668 282l30-14"/>
                    <path class="k" d="M664 226l16-8 50 18 2 40-20 4-46-28zM672 232c14-4 22 10 14 24M690 226v32M704 230v36M720 236v44M664 240l44 22M745 240v50M760 244v44M752 240v52M772 270c6-14 28-18 34 0 2 14-24 20-32 10M770 240v20c20 14 50 8 54-10l2-24M790 262c8-6 14 6 8 14M775 245c10 12 40 10 50-6M840 205v30l44 18 20-18M852 208v28M870 200v34l14 12"/>
                    <path class="k" d="M680 196c10-20 40-28 56-10 14 14 16 34 12 48l-60-24zM690 200c20-6 40 10 40 30M700 192c22-4 42 14 42 40M712 186c18 0 34 20 34 46M706 184c0-26 14-36 40-44M748 232c10-30 4-44-18-52M764 166c16-20 40-34 64-34 22 10 36 28 36 56l-16 12-80 30M780 176l14-4M798 168l10 2M820 150l14 10M800 196v20l20-8 4-28M830 172l-6 28M842 166v24M776 130l22-6M750 132c10-6 30-10 50-8"/>
                    <path class="k" stroke-width="5" d="M760 186l10-2M770 200l8 8M812 170l10-10M806 192l14-4v22M672 244l16 8M676 256l20-8M838 176l20-8v22l-20 8zM730 262h26M736 278l22-6M780 270l22-2M858 214l14 10M712 172h38"/>
                    <ellipse class="k" stroke-width="6" cx="745" cy="148" rx="19" ry="9"/>
                    <path class="k" stroke-width="4" d="M726 150v16c6 10 32 10 38 0v-16M730 170c10 8 26 6 34-2"/>
                    <path class="k" stroke-width="10" d="M680 196l66 40 118-40v-20" stroke-dasharray="14 1 5 1"/>
                    <path class="k" stroke-width="5" d="M684 206l62 42 120-44v-16"/>
                    <path class="k" stroke-width="6" d="M788 114v16M806 112l4 14M816 110l4 16M800 118h28M828 120l10 14M848 136l20-6 26 16-4 32-22 4-20-22zM856 136v28M868 132v40M878 126v20M852 156l40-4M674 240h16M668 226l20-10"/>
                    <path class="k" stroke-width="9" d="M649 262v12M724 314v14M901 230v14M745 262v20M734 334v10M890 256v10M866 218l-10-14"/>
                    <path class="k" d="M748 290l24-8v16l-22 10zM860 236l20 4v12M640 262l20 10M716 318l20 12M892 234l18 10"/>
                </g>

                <!-- main sheet, front view -->
                <g transform="translate(385 420) scale(.33333)">
                    <path class="f" d="M17 16h1420v1003H17z"/>
                    <path class="k" stroke-width="5" d="M52 25h1376v985H52z"/>
                    <use href="#side" x="25" y="756" width="28" height="256"/>
                    <path class="k thick" d="M381 64h39M600 49h30"/>
                    <path class="k" d="M236 196c-10-16 0-22 20-24h60c40 0 56 6 52 24l-12 10H246zM262 176c4-22 40-24 50 0M270 168c6-14 26-14 32 0M228 180l-10 14 20 14M370 180l10 14-16 14M206 230v-10c16-8 30-4 36-4l4-14M206 248v20c20-8 20 10 42 0l10-18M246 250v-30M272 232v-20c0-8 32-8 32 0v20M272 244v24l20 8 12-14v-18M324 232v-20c0-6 18-6 18 0v20M324 244v24h18l4-26M212 232h160M212 244h160M370 216h-26M252 270v24c20 14 70 14 80-2M186 224l20 10v14l-20 12M384 224l-20 10v14l20 10M160 224h26v40h-26zM396 224h22v40h-22zM420 230l16 6M418 250l14-6M362 262c-8 6 2 16-12 24M212 262c14-4 16 10 22 18M182 318h460v26H156M182 318v50"/>
                    <path class="k" d="M156 344c10 16 20 26 44 30 24-6 44-10 40 22 4 30-6 50-8 90 2 40 10 66 56 66 50 2 68-20 66-60-6-30-24-70-8-120 40-20 70-8 120-10 60-4 100 6 160 10 18-2 28-10 36-28"/>
                    <path class="k" stroke-width="5" d="M262 174c4-16 46-16 52 0M238 182h130M222 206c10-8 16-8 24 0M362 206c8-8 14-6 20 0M206 222c10-8 26-6 34-4M344 214c10 0 20 4 26 10M166 222v44M176 224v40M402 222v44M410 222v44M424 236v16M192 226v34M386 226v34M250 262c6 8 6 20 14 30M318 268c4 10 2 16 0 24M222 262c4 12 14 14 18 24M340 262l20 20"/>
                    <path class="k" d="M428 208h34v28h-34zM428 236v82M460 236v84M436 220h18v16M432 268h30M482 200c-12 10-10 64 2 78h90c10-8 8-60-4-78zM574 200h26c14 10 14 66 0 78h-26M470 200v78M466 230h-6M490 178h46v8h-46zM496 186v14h32v-14M476 200h134M514 254h26v18h-26zM484 278l-14 40M570 278l12 40M508 284v34M546 284v34M484 280h90M256 344v202M268 344v202M306 344v202M320 344v202M256 546h66"/>
                    <circle class="k" cx="289" cy="526" r="18"/>
                    <path class="k" stroke-width="11" d="M258 301h62M318 296c20-2 12-8 26-8v-18M344 290h10v-14"/>
                    <path class="k" stroke-width="9" d="M198 312h34M350 312h36M286 292v10" stroke-dasharray="12 2"/>
                    <path class="k" stroke-width="4" d="M198 310c0-24 34-24 34 0M350 310c0-24 34-24 34 0M206 300h18M358 300h18M210 288v26M222 288v26M362 288v26M374 288v26M212 236v16M370 236v16M287 136v26M262 302h-14M196 336v20M396 334v24M624 334v24M190 344h12M390 344h12M618 344h12"/>
                    <path class="u" d="M152 86v160M152 86h494v234M152 102h459v130M287 118h161M287 118v60M448 102v130M450 136c6-10 12-14 24-14M206 162l-12 70M376 162l14 70M212 194h160M212 194v70M366 194v66M137 238h498M146 238h90M180 306v68M410 308v72M640 306v44M250 238v288h38M186 318v40M405 318v30M305 488l58-24M400 350l10 36M130 190l20 12M130 196l26 28M130 206l22 30M130 280h36l10-20M130 296l60-30M130 306l76-36M130 316l76-44M130 326l82-46M130 336l84-50M300 296l54 56M310 306l46 70M376 250l26 22M386 262l8 30M170 232v30M400 256l16 20M500 272v14M554 268v16M612 362l8-14"/>
                    <path class="u" stroke-width="6" d="M160 162h34M386 162h34M396 80h6M366 114h6M300 98h4M530 98h4M458 378h6M358 461h18M358 470h26M246 190h8M324 190h8M190 166h6M212 250h4M240 300h8M154 240h4M246 268h4M247 408v12M238 170h16M326 170h16M142 280h16M162 262h20M398 264h16M372 232h10"/>
                    <path class="u" stroke-width="10" d="M414 381h38"/>
                    <path class="u" stroke-dasharray="16 4 4 4" d="M287 130v442M137 238h498M447 100v130"/>
                    <circle class="u" cx="214" cy="331" r="6"/><circle class="u" cx="432" cy="331" r="6"/><circle class="u" cx="589" cy="331" r="6"/>
                    <path class="u" stroke-width="5" d="M156 238h60M368 238h54M180 310v30M410 312v40M640 310v30M180 326h-6M184 350h-8M506 196h16M504 188h24"/>

                    <!-- flanges -->
                    <circle cx="160" cy="679" r="18" class="k" stroke-width="10"/><circle cx="160" cy="679" r="10" class="u" stroke-width="7" stroke-dasharray="7 2"/>
                    <path class="u" stroke-width="4" d="M160 652v54M137 679h46M172 650l6-8M140 694l-6 10M180 692l10 12M158 664l16-16M148 668l24 24M172 668l-24 24"/>
                    <circle cx="283" cy="689" r="28" class="k" stroke-width="10"/><circle cx="283" cy="689" r="22" class="u" stroke-width="4" stroke-dasharray="8 3"/><circle cx="283" cy="689" r="14" class="k" stroke-width="6"/><circle cx="283" cy="689" r="9" class="u" stroke-width="8" stroke-dasharray="6 2"/>
                    <path class="u" stroke-width="4" d="M283 722v12M296 660l8-18M256 708l-8 12M308 708l12 14M250 676l-4 10"/>
                    <path class="k thick" d="M156 634h12M279 634h12M396 634h12M456 634h14"/>
                    <path class="k" stroke-width="6" d="M396 648h10v18h-8zM452 650h18v14h-18z"/>
                    <path class="u" stroke-width="5" d="M370 672h14l12-10M424 672h14l12-10"/>

                    <!-- notes -->
                    <path class="k bar" d="M135 811h66M135 818h70M135 825h236M135 858h5M146 858h42M198 858h48M135 867h195M142 905h298M135 918h293M135 932h240M379 932h46M135 943h59M199 943h55M135 957h98M237 957h191M135 972h90M471 811h74M471 820h142M471 846h294M471 855h282M471 864h4M530 864h2M471 878h184M471 888h230M708 888h48M471 897h282M471 906h178M471 915h286M471 929h150M630 931h80M716 931h36M471 966h276M471 976h300M471 984h80M135 964h45"/>
                    <path class="k" stroke-width="9" d="M135 833h293M135 842h160M298 842h122M135 850h50M135 875h250M156 884h240M156 892h158M318 892h66M471 831h296M471 837h166M471 860h60M471 870h296M471 921h20M471 938h120M471 945h190M471 953h188"/>
                    <path class="k" d="M136 884l8 4M138 892h8"/>
                </g>

                <!-- main sheet, side view and tables -->
                <g transform="translate(620 420) scale(.33333)">
                    <path class="k thick" d="M90 64h9"/>
                    <path class="k" d="M44 236c0-34 24-56 48-56 20 0 40 10 42 34l18 22M70 230c4-20 40-20 44 0M110 196c10 12 26 22 36 36M78 166h46l6 16v14M120 170c20 10 4 30 26 40M14 344c8 20 24 22 50 20 30-12 40 10 64 0 16 0 34-6 40-20z"/>
                    <path class="k" d="M44 230h118v12H44zM56 242v50M126 242v50M66 242v46M116 242v46M44 290h28v12H44zM110 290h28v12h-28zM28 302h130v12H28zM28 314v30M158 314v30M14 344h154M70 262h44v14l-12 12H80l-12-12zM24 260v44"/>
                    <circle class="k" stroke-width="4" cx="92" cy="234" r="20"/><circle class="k" stroke-width="5" cx="92" cy="236" r="12"/><circle class="k" stroke-width="6" cx="92" cy="236" r="4"/>
                    <path class="k" stroke-width="13" d="M26 260v45"/>
                    <path class="k" stroke-width="6" d="M84 140v26M78 170h46M8 272h26M10 292h20M60 250h10M114 250h10M62 266v20M122 262v24M84 268h18M80 276h26"/>
                    <path class="u" d="M24 86v190M24 86h137v150M24 194h68M197 140v206M110 140h87M162 236h36M160 346h38M160 314h20v30M0 236h30M4 236v48M0 294c10 2 20-2 24-10M82 132c2-10 4-16 10-20M100 166c4-20 12-40 28-54M100 154l16-40M32 306v66M152 306v66M30 250l40 10M114 256l44 14M66 256v20M118 240v20M72 276h40"/>
                    <path class="u" stroke-width="6" d="M92 81h4M56 190h10M78 172h44M195 186h4M195 288h4M32 308v30M152 308v30M176 328h6M62 256h8M116 258h8M0 258h4"/>
                    <path class="u" stroke-dasharray="14 4 4 4" d="M92 160v232M0 237h196"/>
                    <path class="k" stroke-width="4" d="M317 76h406v51H317zM374 76v51M466 76v51M605 76v51M374 88h349M317 106h406M415 88v39M436 88v39M505 88v39M540 88v39M563 88v39M590 88v39M649 88v39M676 88v39M698 88v39M317 116h406"/>
                    <path class="k bar" d="M318 66h90M333 87h26M400 79h46M516 79h42M640 79h46M378 94h34M418 96h14M440 94h20M470 94h30M508 94h26M544 94h16M568 96h18M612 92h22M654 96h16M680 94h12M702 98h16M320 107h50M378 120h34M418 122h14M440 120h20M470 120h30M508 120h28M568 120h20M610 120h34M654 120h16M680 120h12M320 120h10M510 98h20"/>
                    <path class="k" d="M545 182h178v173H545zM560 182v173M665 182v173M675 182v173M692 182v173M709 182v173M545 208h178M545 220h178M545 231h178M545 242h178M545 253h178M545 264h178M545 275h178M545 288h178M545 298h178M545 309h178M545 320h178M545 331h178M545 343h178M692 194h31"/>
                    <path class="k bar" d="M588 195h30M563 215h46M563 226h49M563 236h72M563 247h72M563 258h88M563 269h24M563 281h90M563 292h24M563 302h67M563 314h84M563 325h72M563 336h40M563 347h30M680 215h8M680 236h8M682 258h4M682 302h6M682 347h6M696 187h26M678 187h12M700 215h5M714 215h6M700 247h5M714 269h6M700 292h5M714 325h6M552 190v10"/>
                    <path class="k" stroke-width="9" d="M546 172h114M411 494h100M411 507h15"/>
                    <path class="k bar" d="M411 519h6M422 519h20M446 519h6M456 519h18M411 531h60M411 545h68M484 545h10M500 545h12M411 558h126M411 586h86M411 598h26M440 598h30M476 598h18M498 598h12M411 611h96M512 611h34M550 611h14M570 611h24M411 625h176M592 625h14M612 625h20M411 639h54M411 651h10M424 651h162M592 651h64M414 664h84M414 678h36M456 680h14M476 678h28M414 691h62M482 691h8M496 691h20M411 705h10M424 705h164M592 705h50M414 718h84M414 731h40M460 731h18M482 731h24M414 745h46M466 745h20M492 745h26M411 758h50M411 771h6M422 771h20M448 771h16M411 784h70M411 798h66M482 798h14M502 798h34M411 811h70M411 825h20M436 825h8M450 825h12M468 825h14"/>
                    <path class="k thick" d="M411 571h100M516 571h50M540 627h30"/>
                    <use href="#stamp" x="410" y="917" width="313" height="95"/>
                    <path class="k thick" d="M549 990h68M666 1011h30"/>
                </g>

                <!-- foundation plan -->
                <g transform="translate(870 585) scale(.33333)">
                    <path class="f" d="M26 22h708v502H26z"/>
                    <path class="k" stroke-width="5" d="M59 31h667v485H59z"/>
                    <use href="#side" x="32" y="261" width="28" height="256"/>
                    <use href="#stamp-low" x="411" y="489" width="315" height="28"/>
                    <path class="k" stroke-width="9" d="M309 65h168M182 181h480v142H182z"/>
                    <path class="k" stroke-width="5" d="M330 176h24M336 172h14"/>
                    <path class="k" d="M271 206h52v124h-52z"/>
                    <circle class="k" stroke-width="5" cx="297" cy="232" r="18"/>
                    <path class="u" stroke-dasharray="16 4 4 4" d="M163 193h496M163 253h496M163 313h496M187 166v164M421 166v164M655 166v164"/>
                    <g class="u"><circle cx="188" cy="192" r="17"/><circle cx="421" cy="192" r="17"/><circle cx="654" cy="192" r="17"/><circle cx="188" cy="312" r="17"/><circle cx="421" cy="312" r="17"/><circle cx="654" cy="312" r="17"/></g>
                    <path class="u" d="M187 192v-56h157v44M297 136v96h-50v21h30M144 130l40 48M337 114l-36 98M397 114l-38 64M489 114l-38 68M146 262l124 40M187 313v28h468v-28M182 323v36h480v-36M662 181h36v142h-36M655 193h24v120h-24"/>
                    <path class="u" stroke-width="6" d="M85 126h50M90 135h36M129 135h6M337 114h40M400 114h40M490 114h50M87 264h44M118 258h14M240 133h6M319 133h5M303 337h6M534 337h10M417 355h10M676 250h4M694 250h4M247 238v4"/>
                </g>

                <!-- lifting schemes and the last sheet -->
                <g transform="translate(1120 585) scale(.33333)">
                    <path class="f" d="M27 22h710v502H27zM781 22h358v502H781z"/>
                    <path class="k" stroke-width="5" d="M61 31h668v485H61zM817 31h313v485H817z"/>
                    <use href="#side" x="34" y="261" width="28" height="256"/>
                    <use href="#side-low" x="795" y="371" width="22" height="146"/>
                    <use href="#stamp-low" x="414" y="489" width="315" height="28"/>
                    <use href="#stamp-low" x="816" y="489" width="315" height="28"/>
                    <path class="k" stroke-width="9" d="M360 65h75M213 118h84M516 118h75M924 65h102"/>
                    <path class="k" stroke-width="10" d="M252 208l-66 84M254 208l66 84"/>
                    <path class="k" d="M244 162h22M254 158v14M172 286h168v10H172zM266 246h60v28h-60zM246 190c-2-24 18-24 16 0zM210 240v40M226 236v50M200 256h60M288 240v44M306 236v42"/>
                    <path class="k" stroke-width="5" d="M192 250c4-20 44-24 52-4M180 254v16M196 246v34M216 244h20M232 252v30M246 250v24M262 250v30M276 240h20M272 256h14v22M314 246v26M200 268h40M210 278h16"/>
                    <path class="k" stroke-width="9" stroke-dasharray="9 4" d="M176 256l30-16h34l22 20M206 232h24M186 272h30M262 262h20M254 190v24M280 244h24"/>
                    <path class="u" stroke-width="5" stroke-dasharray="12 3" d="M160 260h50M226 260h110M168 250v22M236 270l-14 36M242 264v48M254 176v20M234 204l20 12M290 240v12M246 196l10 12M208 228v10M262 292h10"/>
                    <path class="u" stroke-width="6" d="M190 306h26"/>
                    <path class="k" stroke-width="10" d="M548 206l-28 64M554 206l30 60"/>
                    <path class="k" d="M540 162h22M550 158v14M542 190c-2-24 18-24 16 0zM524 280h54M536 250h30v30h-30z"/>
                    <path class="k" stroke-width="5" d="M530 236c6-10 34-10 42 0M542 232v40M562 234v44M534 262h36M506 252v16M592 250v18M574 260v20"/>
                    <path class="k" stroke-width="9" stroke-dasharray="9 4" d="M512 258h20M530 240h40M568 262h24M534 274h46M551 190v50"/>
                    <path class="u" stroke-width="5" stroke-dasharray="12 3" d="M496 258h36M562 258h40M552 240v70M542 270l-14 36M551 176v20M536 206l14 8M504 250v20M598 250v20M484 292h3M615 292h3"/>
                    <path class="u" stroke-width="6" d="M498 306h24M550 310h26"/>
                    <path class="k" stroke-width="19" d="M966 113h20M936 185h20M1022 157h16"/>
                    <path class="k" stroke-width="9" stroke-dasharray="8 3" d="M946 162h64M956 140h14M986 140h18M960 178h50M950 150h14M990 152h16M930 160h14"/>
                    <circle class="k" cx="976" cy="158" r="24"/>
                    <path class="u" stroke-width="5" stroke-dasharray="14 3" d="M976 96v66M922 158h50M980 158h66M930 196h22M964 180l22 28M996 176l22 30M960 118h30M932 150v22M1028 144v26M930 172h12"/>
                    <path class="u" stroke-width="9" d="M987 210h18M1020 210h20"/>
                    <path class="k" stroke-width="8" d="M849 342h86M849 349h86"/>
                    <path class="k bar" d="M935 342h70M870 366h46M950 370h20M996 368h18M946 380h26"/>
                    <path class="k" d="M848 362h179v84H848zM938 362v84M982 362v84M848 376h179M848 388h179M848 399h179M848 410h179M848 422h179M848 434h179"/>
                    <path class="k thick" d="M851 381h54M851 393h82M851 404h54M851 415h66M851 427h66M851 438h66M948 393h24M948 404h24M948 415h24M948 427h24M948 438h24M996 381h18M996 393h18M996 404h18M996 415h18M996 427h18M996 438h18"/>
                </g>

                <!-- UCS icon -->
                <path class="ucs" d="M24.500 936v50M24.500 986.500H75M20.500 981.500h9v9h-9zM26 919l6 6v7M39 919l-6 6M79 972l13 13M92 972l-13 13"/>
                <!-- crosshair -->
                <path class="ucs" d="M1413 978.500h45M1464 978.500h39M1461.500 930v45M1461.500 982v25M1458.500 975.500h6v6h-6z"/>
            </svg>

            <div class="view-controls"><button>[−]</button><button>[Сверху]</button><button>[2D-каркас]</button></div>

            <div class="doc-buttons">
                <button aria-label="Свернуть"><svg viewBox="0 0 14 14"><path d="M1.500 7.500h11v4h-11z" fill="#fff" stroke="#666"/></svg></button>
                <button aria-label="Восстановить"><svg viewBox="0 0 14 14"><path d="M4.500 1.500h8v8h-8z" fill="#fff" stroke="#555"/><path d="M1.500 3.500h9v9h-9z" fill="#fff" stroke="#555"/><path d="M4.500 6.500h3v3h-3z" fill="#fff" stroke="#555"/></svg></button>
                <button aria-label="Закрыть"><svg viewBox="0 0 14 14"><path d="M2 2l10 10M12 2L2 12" stroke="#555" stroke-width="4.500"/><path d="M3 3l8 8M11 3l-8 8" stroke="#fff" stroke-width="2"/></svg></button>
            </div>

            <svg class="viewcube" viewBox="0 0 130 140" width="130" height="140">
                <circle cx="65" cy="71" r="54" fill="none" stroke="#dddedb" stroke-width="10"/>
                <rect x="39.500" y="45.500" width="51" height="51" fill="#e6e7e7" stroke="#8f908e"/>
                <path d="M49 55h32v32H49z" fill="#d9dcdf"/>
                <text class="cube-text" x="65" y="76">Сверху</text>
                <text class="side-text" x="65" y="22">С</text>
                <text class="side-text" x="9" y="78">З</text>
                <text class="side-text" x="121" y="78">В</text>
                <text class="side-text" x="65" y="135">Ю</text>
            </svg>
            <button class="wcs">МСК<svg viewBox="0 0 10 6"><path d="M1 .5h8L5 5z" fill="none" stroke="#aab"/></svg></button>

            <div class="navbar">
                <svg viewBox="0 0 34 215" width="34" height="215">
                    <g fill="none" stroke="#babbb9">
                        <circle cx="27" cy="7" r="3"/>
                        <path d="M17 21h11v11a11 11 0 1 1-11-11z"/><circle cx="17" cy="31" r="6"/>
                        <path d="M5 58.500h25M5 165.500h25"/>
                        <path d="M13 86c-3-3-5-7-6-9 2-1 4 2 6 3l-2-11c0-2 2-2 2 0l2 8 0-11c0-2 3-2 3 0v11l2-10c0-2 3-2 3 0l-1 11 3-6c1-2 3-1 2 0-1 8-2 11-5 14z"/>
                        <path d="M6 92l20 22M6 97v-5h5M21 92L6 108M16 92h5v5M6 103v5h5"/><circle cx="21" cy="106" r="5"/><path d="M24 110l5 4" stroke-width="3"/>
                        <path d="M16 131l4 5h-3v15h-3v-15h-3zM12 138c-10 3-7 9 5 9 13 0 14-8 3-10M9 141l-3 4 5 2"/>
                        <path d="M6 171h5v6H6zM14 171h5v6h-5zM22 171h5v6h-5zM6 180h16v12H6z"/>
                        <circle cx="27" cy="207" r="3"/>
                    </g>
                    <path d="M15 50h5l-2 3zM15 120h5l-2 3zM15 158h5l-2 3zM11 183l6 3-6 3z" fill="#adaeac"/>
                </svg>
            </div>
        </div>

        <footer class="bottom">
            <div class="layouts">
                <button class="layout active">Модель</button>
                <button class="layout">Лист1</button>
                <button class="layout">Лист2</button>
                <button class="layout plus" aria-label="Новый лист"><svg viewBox="0 0 9 9"><path d="M4.500 0v9M0 4.500h9" stroke="#a9b0b8" stroke-width="2"/></svg></button>
            </div>
            <div class="status">
                <div class="group"><button class="model">МОДЕЛЬ</button></div>
                <div class="group">
                    <button aria-label="Сетка"><svg viewBox="0 0 18 18"><path d="M5.500 1v16M9.500 1v16M13.500 1v16M1 5.500h16M1 9.500h16M1 13.500h16" class="w"/></svg></button>
                    <button aria-label="Привязка к сетке"><svg viewBox="0 0 18 18"><path d="M3 4h12M3 9h12M3 14h12" stroke="#ddd" stroke-width="2" stroke-dasharray="2 3"/></svg></button>
                    <button class="arrow" aria-label="Еще"><svg class="caret-m"><use href="#caret"/></svg></button>
                </div>
                <div class="group">
                    <button aria-label="Орто"><svg viewBox="0 0 18 18"><path d="M2.500 1v15.500H17M2.500 10.500h5v6" class="w"/></svg></button>
                    <button class="on" aria-label="Полярное отслеживание"><svg viewBox="0 0 18 18"><circle cx="8" cy="10" r="6.500" class="w"/><path d="M8 9.500h9M8 9.500l7-8M12 6v7" class="w"/></svg></button>
                    <button class="arrow" aria-label="Еще"><svg class="caret-m"><use href="#caret"/></svg></button>
                    <button aria-label="Изометрия"><svg viewBox="0 0 18 18"><path d="M3 2l6 7" stroke="#e0605c"/><path d="M9.500 1v16" stroke="#53b37e"/><path d="M9 9l6 7" stroke="#ddd"/><path d="M8.500 8.500h2v2h-2z" class="w"/></svg></button>
                    <button class="arrow" aria-label="Еще"><svg class="caret-m"><use href="#caret"/></svg></button>
                </div>
                <div class="group">
                    <button class="on" aria-label="Отслеживание"><svg viewBox="0 0 18 18"><path d="M15 2L2 15.500h15" class="w"/><path d="M7 8h3v3H7z" class="wf"/></svg></button>
                    <button class="on" aria-label="Объектная привязка"><svg viewBox="0 0 18 18"><path d="M4.500 7v9.500h12v-12H8M1.500 1.500h4v4h-4z" class="w"/></svg></button>
                    <button class="arrow" aria-label="Еще"><svg class="caret-m"><use href="#caret"/></svg></button>
                    <button class="on" aria-label="Вес линий"><svg viewBox="0 0 18 18"><path d="M1 3h16M11 7h6M11 11h6M13 15h4" stroke="#fff"/><path d="M1 7h9M1 11h7" stroke="#fff" stroke-width="2"/><path d="M1 15h11" stroke="#fff" stroke-width="3"/></svg></button>
                </div>
                <div class="group">
                    <button class="on" aria-label="Видимость аннотаций"><svg viewBox="0 0 18 18"><path d="M8 1l2 8 5 6-5-2-2 4-2-4-5 2 5-6z" fill="#fff"/><circle cx="14" cy="5" r="2" stroke="#fff" fill="none"/></svg></button>
                    <button aria-label="Автомасштаб"><svg viewBox="0 0 18 18"><path d="M8 2l2 7 4 6-4-2-2 4-2-4-4 2 4-6z" class="wf"/><path d="M15 1l-4 5h4l-4 5" class="w" stroke-width="1.500"/></svg></button>
                    <button aria-label="Масштаб аннотаций"><svg viewBox="0 0 18 18"><path d="M9 2l2 7 4 6-4-2-2 4-2-4-4 2 4-6z" class="wf"/></svg></button>
                    <button class="scale">1:1<svg class="caret-m"><use href="#caret"/></svg></button>
                </div>
                <div class="group">
                    <button aria-label="Рабочее пространство"><svg viewBox="0 0 18 18"><circle cx="9" cy="9" r="4" fill="none" stroke="#ddd" stroke-width="3.500"/><circle cx="9" cy="9" r="6.800" fill="none" stroke="#ddd" stroke-width="2.500" stroke-dasharray="2.700 2.640"/></svg></button>
                    <button class="arrow" aria-label="Еще"><svg class="caret-m"><use href="#caret"/></svg></button>
                </div>
                <div class="group"><button aria-label="Монитор аннотаций"><svg viewBox="0 0 18 18"><path d="M9 1v16M1 9h16" stroke="#ddd" stroke-width="2"/></svg></button></div>
                <div class="group"><button aria-label="Изоляция объектов"><svg viewBox="0 0 18 18"><path d="M2.500 1.500h6v6h-6zM7 11l3 5.500H4z" class="w"/><circle cx="13.500" cy="8.500" r="3" class="w"/></svg></button></div>
                <div class="group"><button aria-label="Производительность"><svg viewBox="0 0 18 18"><circle cx="9" cy="8" r="6" fill="#2f77c4"/><path d="M4 0v9h9M1 4h6" stroke="#cfe3f5" fill="none"/><path d="M1 11h5v5H1z" fill="#f0b13c"/><path d="M7 12l4 4 6-8" stroke="#58b368" stroke-width="3" fill="none"/></svg></button></div>
                <div class="group">
                    <button aria-label="Очистить экран"><svg viewBox="0 0 18 18"><path d="M1.500 3.500h15v12h-15zM10 8l4-3M11 5h3v3M8 11l-4 3M4 11v3h3" class="w"/></svg></button>
                    <button aria-label="Адаптация"><svg viewBox="0 0 18 18"><path d="M1 3h16M1 9h16M1 15h16" stroke="#ddd" stroke-width="2"/></svg></button>
                </div>
            </div>
        </footer>
    </main>
</body>
</html>
```
FILE: styles.css
```
* {
    box-sizing: border-box;
}

body {
    margin: 0;
    min-height: 100vh;
    display: flex;
    flex-direction: column;
    background: #222933;
    color: #e6e8ea;
    font: 11px/16px "Noto Sans", "Open Sans", sans-serif;
}

button, input, select {
    margin: 0;
    padding: 0;
    border: 0;
    background: none;
    color: inherit;
    font: inherit;
}

button {
    display: flex;
    align-items: center;
    justify-content: center;
    white-space: nowrap;
}

button > svg {
    flex: none;
    width: 18px;
    height: 18px;
}

.sprite {
    position: absolute;
    width: 0;
    height: 0;
}

/* Icon colours */
.w { fill: none; stroke: #dcdfe2; }
.b { fill: none; stroke: #74b9ee; }
.g { fill: none; stroke: #4fc17c; }
.wf { fill: #dcdcdc; }
.bf { fill: #7cc4f5; }
.yf { fill: #fbd07c; }
.y { color: #fbd07c; }

svg.caret {
    width: 8px;
    height: 4px;
}

svg.caret-m {
    width: 7px;
    height: 4px;
}

svg.caret-s {
    width: 5px;
    height: 3px;
}

/* Header */
.header {
    display: grid;
    grid-template-columns: 50px 1fr;
    grid-template-rows: 30px 19px;
}

.app-button {
    grid-row: 1 / 3;
    width: 41px;
    height: 41px;
    margin: 4px;
    background: linear-gradient(#c4c4c4, #8e8e8e);
    border: 1px solid #ddd;
}

.app-button svg {
    width: 38px;
    height: 38px;
}

.titlebar {
    display: flex;
    align-items: center;
}

.quick {
    display: flex;
    gap: 6px;
    padding-left: 3px;
}

.quick button {
    width: 18px;
    height: 18px;
}

.quick .narrow {
    width: 6px;
}

.off {
    opacity: .35;
}

.title {
    flex: 1;
    display: flex;
    justify-content: center;
    gap: 14px;
    margin: 0;
    padding-right: 6px;
    font-size: 11px;
    font-weight: normal;
    white-space: nowrap;
}

.services {
    display: flex;
    align-items: center;
    gap: 4px;
}

.play {
    width: 4px;
    height: 8px;
    margin-right: 2px;
}

.search {
    width: 179px;
    height: 20px;
    padding: 0 3px;
    background: #465160;
    font-style: italic;
}

.search::placeholder {
    color: #b4bac2;
}

.login {
    gap: 4px;
}

.login svg.caret-s {
    margin: 0 6px 0 3px;
}

.find {
    margin-left: 2px;
}

.a360, .help {
    gap: 6px;
    padding-right: 9px;
}

.a360 {
    padding-right: 5px;
}

.help {
    padding-left: 10px;
    border-left: 1px solid #4c5561;
}

.help span {
    width: 15px;
    height: 15px;
    border-radius: 8px;
    background: #eef2fa;
    color: #2456b4;
    font-size: 13px;
    font-weight: bold;
    line-height: 15px;
}

.window-buttons {
    display: flex;
    gap: 11px;
    padding: 0 9px 0 60px;
}

.window-buttons svg {
    width: 14px;
    height: 14px;
}

/* Ribbon tabs */
.tabs {
    display: flex;
    gap: 1px;
    color: #adb3ba;
}

.tab {
    padding: 0 10px 2px;
}

.tab.wide {
    padding: 0 12px 2px;
}

.tab.active {
    background: #3b4453;
    color: #f2f3f4;
}

.tab-toggle {
    gap: 5px;
    margin-left: 20px;
}

.tab-toggle svg:first-child {
    width: 14px;
    height: 8px;
}

/* Ribbon */
.frame {
    flex: 1;
    display: flex;
    flex-direction: column;
    border: solid #36404d;
    border-width: 0 4px 4px;
}

.ribbon {
    display: grid;
    grid-template-columns: 261px 133px 140px 271px 86px 243px 75px 106px 100px 69px;
    padding: 0 2px;
}

.panel {
    display: flex;
    flex-direction: column;
    height: 97px;
    background: #3b4453;
    border-right: 1px solid #262e39;
}

.panel-body {
    flex: 1;
    display: flex;
    padding-top: 4px;
}

.panel-body.pad {
    padding-left: 4px;
}

.panel-title {
    position: relative;
    display: flex;
    justify-content: center;
    height: 19px;
}

.panel-title button {
    gap: 7px;
}

.panel-title.with-corner {
    padding-right: 12px;
}

.panel-title .corner {
    position: absolute;
    right: 4px;
    top: 8px;
}

.corner svg {
    width: 6px;
    height: 6px;
}

.big {
    flex-direction: column;
    justify-content: flex-start;
    height: 72px;
}

.big > svg:first-child {
    width: 34px;
    height: 38px;
    overflow: visible;
}

.big svg.caret-s {
    margin-top: 2px;
}

.w48 { width: 48px; }
.w54 { width: 54px; }
.w60 { width: 60px; }
.w68 { width: 68px; }
.w74 { width: 74px; }
.w80 { width: 80px; }
.w84 { width: 84px; }

.big-a {
    fill: #dcdcdc;
    stroke: #dcdcdc;
    font: 36px "Liberation Sans", sans-serif;
    text-anchor: middle;
}

.tools button {
    height: 24px;
}

.split {
    display: flex;
    justify-content: center;
    gap: 1px;
}

.split .arrow {
    width: 12px;
}

.stack {
    display: flex;
    flex-direction: column;
    align-items: flex-start;
    padding-left: 3px;
}

.stack.tight {
    padding-left: 2px;
}

.stack1 {
    display: flex;
    flex-direction: column;
}

.stack1 button {
    width: 24px;
}

.modify {
    display: grid;
    grid-template-columns: 28px 32px 40px 28px;
    grid-auto-rows: 24px;
}

/* Drop-downs */
.combo {
    display: flex;
    align-items: center;
    height: 21px;
    padding-right: 2px;
    background: #465264;
    border: 1px solid #29313c;
}

.combo select {
    flex: 1;
    min-width: 0;
    appearance: none;
    font-size: 12px;
}

.combo .caret {
    pointer-events: none;
}

.layer-box {
    width: 207px;
    padding-top: 1px;
}

.layer-combo {
    gap: 3px;
    margin-left: 1px;
    padding-left: 5px;
}

.layer-tools {
    display: grid;
    grid-template-columns: repeat(5, 24px);
    padding-top: 2px;
}

.swatch {
    width: 14px;
    height: 14px;
    margin: 0 2px 0 4px;
    background: #000;
}

.props {
    display: grid;
    grid-template-columns: 20px 135px;
    grid-auto-rows: 24px;
    padding-top: 1px;
}

.props label {
    height: 21px;
}

.props label svg {
    width: 18px;
    height: 18px;
    margin-top: 1px;
}

.color-combo .swatch {
    width: 16px;
    height: 16px;
    margin: 0 10px 0 11px;
    border: 1px solid #888;
}

.sample {
    width: 64px;
    height: 1px;
    margin: 0 2px;
    background: #fff;
}

/* File tabs */
.file-tabs {
    display: flex;
    align-items: flex-end;
    height: 31px;
    padding: 4px 20px 0;
    border-bottom: 4px solid #3b4453;
}

.file-tab {
    display: flex;
    align-items: center;
    height: 22px;
    border-radius: 12px 12px 0 0;
}

.file-tab.start {
    justify-content: flex-start;
    width: 125px;
    padding-left: 12px;
    background: #2d3642;
    color: #adb3ba;
}

.file-tab.active {
    gap: 12px;
    width: 197px;
    padding-left: 10px;
    background: #3b4453;
}

.close svg, .plus svg {
    width: 9px;
    height: 9px;
}

.file-tab.plus {
    align-self: center;
    width: 24px;
    height: 16px;
    margin-left: 6px;
    background: #2d3642;
    border-radius: 6px;
}

/* Drawing area */
.canvas {
    position: relative;
    flex: 1;
    display: flex;
    background: #d9dad7;
    color: #111;
}

.drawing {
    flex: 1;
    width: 100%;
    min-width: 0;
}

.k { fill: none; stroke: #0c0c0c; }
.u { fill: none; stroke: #1414ee; }
.f { fill: none; stroke: #3535ea; stroke-width: 4px; }
.k:not([stroke-width]), .u:not([stroke-width]) { stroke-width: 4px; }
.k.bar { stroke-width: 7px; }
.k.thick { stroke-width: 8px; }
.ucs { fill: none; stroke: #222; }

.view-controls {
    position: absolute;
    left: 3px;
    top: 6px;
    display: flex;
    font-size: 12px;
}

.doc-buttons {
    position: absolute;
    right: 9px;
    top: 8px;
    display: flex;
    gap: 6px;
}

.doc-buttons svg {
    width: 14px;
    height: 14px;
}

.viewcube {
    position: absolute;
    right: 18px;
    top: 35px;
}

.cube-text {
    fill: #8a8f94;
    font-size: 14px;
    text-anchor: middle;
}

.side-text {
    fill: #dededc;
    stroke: #b0b1af;
    font-size: 18px;
    text-anchor: middle;
}

.wcs {
    position: absolute;
    right: 60px;
    top: 192px;
    gap: 6px;
    width: 47px;
    height: 17px;
    background: #e2e3e8;
    border-radius: 3px;
    color: #85888c;
}

.wcs svg {
    width: 10px;
    height: 6px;
}

.navbar {
    position: absolute;
    right: 3px;
    top: 235px;
    width: 35px;
    height: 215px;
    background: rgba(220, 221, 219, .6);
    border: 2px solid #b0b1af;
    border-radius: 6px;
}

.navbar svg {
    display: block;
    margin: -2px;
}

/* Bottom bar */
.bottom {
    display: flex;
    justify-content: space-between;
    height: 29px;
}

.layouts {
    display: flex;
    padding-left: 12px;
    gap: 3px;
}

.layout {
    width: 52px;
    height: 18px;
    background: #2d3642;
    border-radius: 0 0 8px 8px;
    color: #adb3ba;
    font-size: 12px;
}

.layout.active {
    width: 68px;
    background: #3b4453;
    color: #fff;
    font-weight: bold;
}

.layout.plus {
    width: 24px;
}

.status {
    display: flex;
    gap: 4px;
    padding: 2px 3px 0 0;
}

.group {
    display: flex;
    gap: 2px;
    height: 24px;
    background: #3b4453;
}

.group button {
    width: 22px;
}

.group .arrow {
    width: 14px;
}

.group .model {
    width: 56px;
}

.group .scale {
    gap: 4px;
    width: 31px;
}

.group .on {
    background: #5b8fc8;
}
```
